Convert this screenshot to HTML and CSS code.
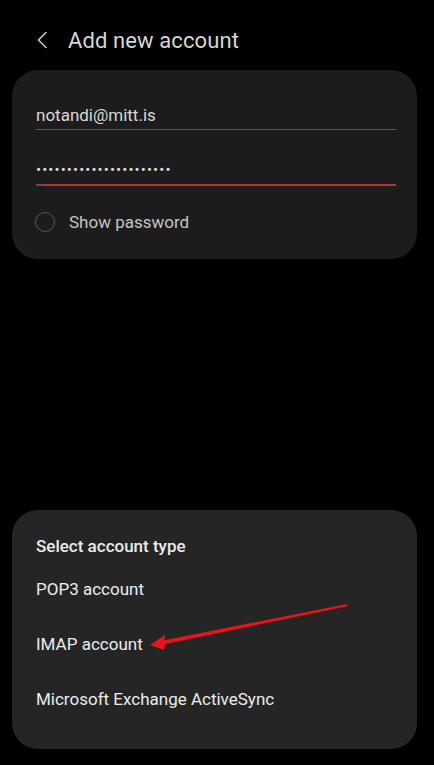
FILE: index.html
```html
<!DOCTYPE html>
<html lang="en">
<head>
<meta charset="utf-8">
<title>Add new account</title>
<link rel="stylesheet" href="styles.css">
</head>
<body>
<div class="screen">
  <header class="topbar">
    <svg class="back" width="12" height="18" viewBox="0 0 12 18"><path d="M10 1.5 L2.5 9 L10 16.5" fill="none" stroke="#c8c8c8" stroke-width="1.6" stroke-linecap="round" stroke-linejoin="round"/></svg>
    <h1 class="title">Add new account</h1>
  </header>

  <section class="card form">
    <div class="field">
      <span class="field-text">notandi@mitt.is</span>
    </div>
    <div class="field active">
      <span class="field-text dots">••••••••••••••••••••••</span>
    </div>
    <label class="check-row">
      <span class="radio"></span>
      <span class="check-label">Show password</span>
    </label>
  </section>

  <div class="spacer"></div>

  <section class="card sheet">
    <h2 class="sheet-title">Select account type</h2>
    <ul class="options">
      <li class="option">POP3 account</li>
      <li class="option imap">IMAP account
        <svg class="arrow" width="200" height="50" viewBox="0 0 200 50"><polygon points="0,43 15,33 14.5,38.3 197,2 197.4,4.2 15.5,42 14,48" fill="#e8141c"/></svg>
      </li>
      <li class="option">Microsoft Exchange ActiveSync</li>
    </ul>
  </section>
</div>
</body>
</html>
```
FILE: styles.css
```css
html, body {
  margin: 0;
  padding: 0;
  background: #000;
}
body {
  font-family: Roboto, "Noto Sans", sans-serif;
  color: #e6e6e6;
}
.screen {
  width: 434px;
  height: 765px;
  display: flex;
  flex-direction: column;
  overflow: hidden;
}
.topbar {
  height: 70px;
  flex: none;
  display: flex;
  align-items: center;
  padding-left: 36px;
  padding-top: 10px;
  box-sizing: border-box;
}
.back {
  display: block;
  margin-right: 20px;
}
.title {
  margin: 0;
  font-size: 22px;
  font-weight: 400;
  color: #d6d6d6;
  letter-spacing: 0.1px;
}
.card {
  margin: 0 17px 0 12px;
  border-radius: 26px;
  flex: none;
}
.form {
  background: #1c1c1c;
  height: 189px;
  box-sizing: border-box;
  padding: 35px 21px 0 24px;
}
.field {
  height: 24px;
  border-bottom: 1px solid #5a5a5a;
  display: flex;
  align-items: flex-start;
}
.field.active {
  margin-top: 30px;
  border-bottom: 2px solid transparent;
  border-image: linear-gradient(to right, #6a4a44 0, #6a4a44 6px, #b23a2c 8px, #b23a2c 100%) 1;
}
.field-text {
  font-size: 17px;
  line-height: 20px;
  color: #d8d8d8;
}
.dots {
  font-size: 15px;
  letter-spacing: 1.1px;
  line-height: 20px;
  color: #dcdcdc;
}
.check-row {
  display: flex;
  align-items: center;
  margin-top: 26px;
}
.radio {
  width: 20px;
  height: 20px;
  border: 1.5px solid #575757;
  border-radius: 50%;
  box-sizing: border-box;
  margin-left: -1px;
  margin-right: 14px;
}
.check-label {
  font-size: 17px;
  color: #c4c4c4;
}
.spacer {
  height: 251px;
  flex: none;
}
.sheet {
  background: #252525;
  height: 239px;
  box-sizing: border-box;
  padding: 26px 24px 0 24px;
}
.sheet-title {
  margin: 0;
  font-size: 17px;
  font-weight: 500;
  color: #ececec;
  line-height: 20px;
}
.options {
  list-style: none;
  margin: 0;
  padding: 0;
}
.option {
  font-size: 17px;
  color: #ececec;
  line-height: 20px;
  margin-top: 23px;
}
.option + .option {
  margin-top: 35px;
}
.imap {
  position: relative;
}
.arrow {
  position: absolute;
  left: 114px;
  top: -32px;
}
```
